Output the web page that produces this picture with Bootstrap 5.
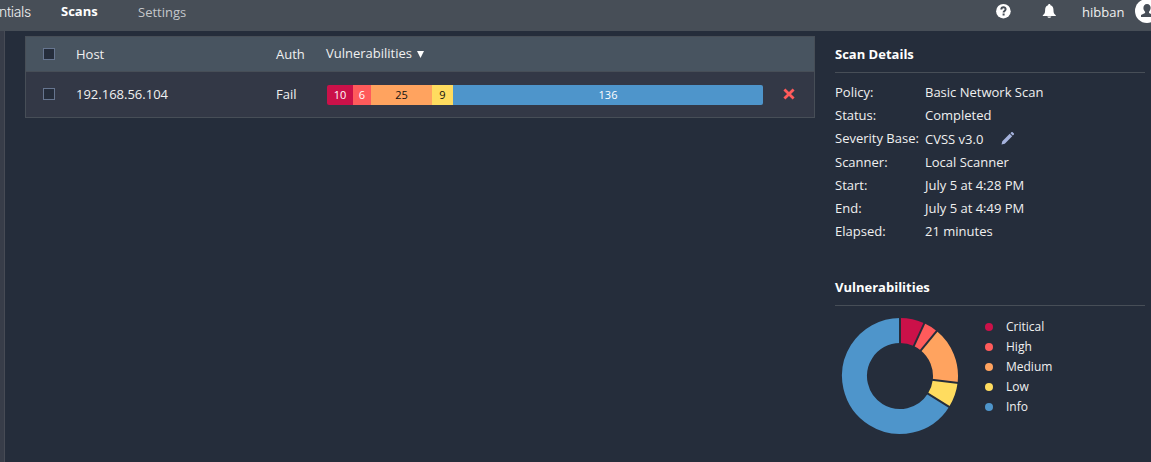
<!DOCTYPE html>
<html lang="en">
<head>
<meta charset="utf-8">
<meta name="viewport" content="width=device-width, initial-scale=1">
<title>Scans</title>
<link href="https://cdn.jsdelivr.net/npm/bootstrap@5.3.0/dist/css/bootstrap.min.css" rel="stylesheet">
<style>
body{background:#252d3b;color:#f0f0f0;font:13px/23px "Open Sans","Noto Sans",sans-serif;height:100vh;overflow:hidden}
.topbar{height:31px;background:#474e57;line-height:18px}
.brand-tail{font-family:Inter,sans-serif;font-size:14px;font-weight:300;letter-spacing:-.35px;width:62px;margin-left:-1px;padding-top:3px}
.nav-scans{width:77px;padding-top:2px}
.nav-settings{color:#c4c7cb;padding-top:3px}
.rail{width:5px;background:#383d49;border-right:1px solid #474b55}
.hosts{width:790px;height:82px;margin:5px 0 0 20px;border:1px solid #474e57}
.hosts-head{height:35px;background:#485460;border-bottom:1px solid #474e57}
.hosts-row{height:45px;background:#333846;padding-bottom:1px}
.hosts-head>*,.hosts-row>*{flex:none}
.tick{width:12px;height:12px;border:1px solid #66758f;background:#252d3b;margin-left:17px;margin-right:21px}
.c-host{width:200px}.c-auth{width:50px}
.sevbar{width:436px;height:20px;border-radius:2px;font-size:11px;line-height:20px;text-align:center;margin:2px 0 0 1px}
.critical{background:#cb1149;color:#fff}.high{background:#ff5b5b;color:#fff}.medium{background:#ffa35f;color:#111}.low{background:#ffdc5f;color:#111}.info{background:#4e95cb;color:#fff}
.details{width:310px;margin-left:20px;padding-top:6px}
.section-title{font-size:13px;line-height:35px;height:36px;font-weight:700;color:#fff;border-bottom:1px solid #474e57;margin:0}
.facts{display:grid;grid-template-columns:90px 1fr;grid-template-rows:23px 23px 24px 23px 23px 23px 23px;margin:8px 0 0;white-space:nowrap}
.facts dt,.facts dd{font-weight:400;margin:0}
.dot{width:8px;height:8px;border-radius:50%;margin-right:13px}
.legend-list{font-size:12px;line-height:20px;margin:11px 0 0 26px}
</style>
</head>
<body>
<header class="topbar d-flex">
  <div class="brand-tail">ntials</div>
  <a class="nav-scans fw-bold text-white text-decoration-none" href="#">Scans</a>
  <a class="nav-settings text-decoration-none" href="#">Settings</a>
  <div class="d-flex ms-auto">
    <svg width="16" height="18" viewBox="0 0 16 18" style="margin-top:3px"><circle cx="8.4" cy="8.2" r="7.3" fill="#fff"/><path d="M6.3 6.6C6.3 3.4 10.7 3.6 10.6 6.3C10.5 8 8.6 7.9 8.6 9.5M8.6 10.5V12.6" fill="none" stroke="#474e57" stroke-width="2"/></svg>
    <svg width="18" height="18" viewBox="0 0 18 18" style="margin:2px 0 0 29px"><path d="M9.3 2C10.2 2 10.5 2.7 10.5 3.3C13 4.1 13.5 6 13.5 8.5C13.5 11 14 12 15.8 13.2V14H2.8V13.2C4.6 12 5.1 11 5.1 8.5C5.1 6 5.6 4.1 8.1 3.3C8.1 2.7 8.4 2 9.3 2ZM7.3 14.5H11.3C11 16.2 7.6 16.2 7.3 14.5Z" fill="#fff"/></svg>
    <span style="margin-left:24px;width:53px;padding-top:3px">hibban</span>
    <svg width="16" height="26" viewBox="0 0 16 26"><circle cx="12" cy="11" r="12" fill="#fff"/><path d="M12 4C9.7 4 8.4 5.7 8.4 8C8.4 9.6 9.2 10.8 10.1 11.7V13L6 15V17H18V15L14 13V11.7C16.8 9 16 4 12 4Z" fill="#474e57"/></svg>
  </div>
</header>
<main class="d-flex" style="height:431px">
  <div class="rail"></div>
  <section class="hosts">
    <div class="hosts-head d-flex align-items-center"><span class="tick"></span><span class="c-host">Host</span><span class="c-auth">Auth</span><span style="margin-top:-2px">Vulnerabilities<svg width="7" height="7" viewBox="0 0 7 7" style="margin-left:5px"><path d="M0 0H7L3.5 7Z" fill="#fff"/></svg></span></div>
    <div class="hosts-row d-flex align-items-center"><span class="tick"></span><span class="c-host">192.168.56.104</span><span class="c-auth">Fail</span>
      <div class="sevbar d-flex overflow-hidden">
        <div class="critical" style="width:26px">10</div><div class="high" style="width:18px">6</div><div class="medium" style="width:61px">25</div><div class="low" style="width:21px">9</div><div class="info" style="width:310px">136</div>
      </div>
      <svg width="12" height="12" viewBox="0 0 12 12" style="margin-left:20px"><path d="M1.4 1.4L10.6 10.6M10.6 1.4L1.4 10.6" stroke="#ff5b5b" stroke-width="2.8"/></svg>
    </div>
  </section>
  <aside class="details">
    <h2 class="section-title">Scan Details</h2>
    <dl class="facts">
      <dt>Policy:</dt><dd>Basic Network Scan</dd>
      <dt>Status:</dt><dd>Completed</dd>
      <dt>Severity Base:</dt><dd class="d-flex" style="padding-top:1px">CVSS v3.0<svg width="13" height="13" viewBox="0 0 13 13" style="margin:4px 0 0 18px"><path d="M.5 12.5L1.3 9.2L8.7 1.8L11.2 4.3L3.8 11.7ZM9.4 1.2L10.6 0H11.4L13 1.6V2.4L11.8 3.6Z" fill="#a5b2dc"/></svg></dd>
      <dt>Scanner:</dt><dd>Local Scanner</dd>
      <dt>Start:</dt><dd>July 5 at 4:28 PM</dd>
      <dt>End:</dt><dd>July 5 at 4:49 PM</dd>
      <dt>Elapsed:</dt><dd>21 minutes</dd>
    </dl>
    <h2 class="section-title" style="margin-top:27px">Vulnerabilities</h2>
    <div class="d-flex">
      <svg width="118" height="118" viewBox="-59 -59 118 118" style="margin:11px 0 0 6px">
        <g fill="none" stroke-width="25" transform="rotate(-90)">
          <circle r="45.5" pathLength="360" stroke="#cb1149" stroke-dasharray="24.8 335.2"/>
          <circle r="45.5" pathLength="360" stroke="#ff5b5b" stroke-dasharray="14.4 345.6" transform="rotate(24.8)"/>
          <circle r="45.5" pathLength="360" stroke="#ffa35f" stroke-dasharray="57.6 302.4" transform="rotate(39.2)"/>
          <circle r="45.5" pathLength="360" stroke="#ffdc5f" stroke-dasharray="25.4 334.6" transform="rotate(96.8)"/>
          <circle r="45.5" pathLength="360" stroke="#4e95cb" stroke-dasharray="237.8 122.2" transform="rotate(122.2)"/>
        </g>
        <g stroke="#252d3b" stroke-width="2"><path d="M0-32V-59"/><path d="M0-32V-59" transform="rotate(24.8)"/><path d="M0-32V-59" transform="rotate(39.2)"/><path d="M0-32V-59" transform="rotate(96.8)"/><path d="M0-32V-59" transform="rotate(122.2)"/></g>
      </svg>
      <ul class="legend-list list-unstyled">
        <li class="d-flex align-items-center"><span class="dot critical"></span>Critical</li>
        <li class="d-flex align-items-center"><span class="dot high"></span>High</li>
        <li class="d-flex align-items-center"><span class="dot medium"></span>Medium</li>
        <li class="d-flex align-items-center"><span class="dot low"></span>Low</li>
        <li class="d-flex align-items-center"><span class="dot info"></span>Info</li>
      </ul>
    </div>
  </aside>
</main>
<script src="https://cdn.jsdelivr.net/npm/bootstrap@5.3.0/dist/js/bootstrap.bundle.min.js"></script>
</body>
</html>
